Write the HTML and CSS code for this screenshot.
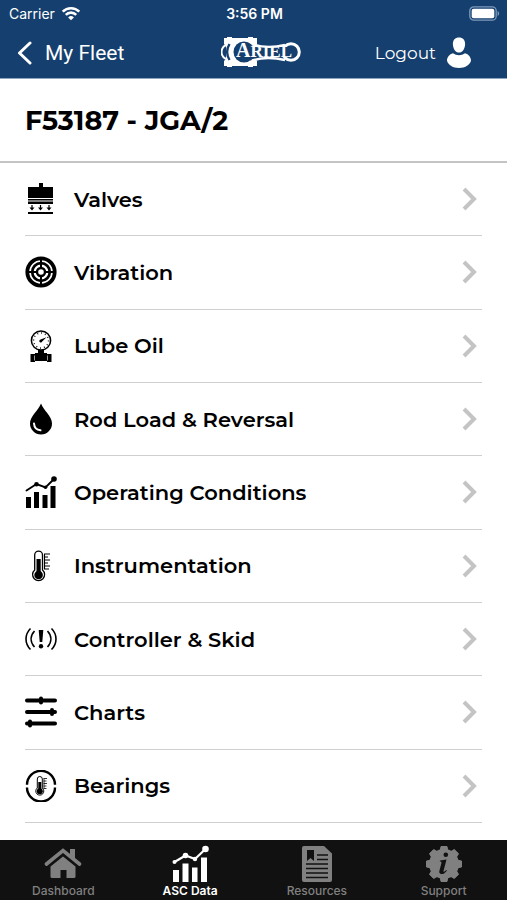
FILE: index.html
```html
<!DOCTYPE html>
<html lang="en">
  <head>
    <meta charset="UTF-8" />
    <meta name="viewport" content="width=device-width, initial-scale=1.0" />
    <title>My Fleet - F53187</title>
    <link rel="stylesheet" href="styles.css">
  </head>
  <body>
    <header class="header">
      <div class="status-bar">
        <div class="carrier">
          <span>Carrier</span>
          <svg width="20" height="15" viewBox="0 0 20 15" fill="none" stroke="#fff" stroke-width="2.6">
            <path d="M1.7 5.6a11.8 11.8 0 0 1 16.6 0M4.8 8.8a7.4 7.4 0 0 1 10.4 0" />
            <path d="M10 14.3l-2.9-2.9a4.1 4.1 0 0 1 5.8 0z" fill="#fff" stroke="none" />
          </svg>
        </div>
        <span class="time">3:56 PM</span>
        <svg class="battery" width="31" height="15" viewBox="0 0 31 15">
          <rect x=".8" y=".8" width="26.4" height="13.4" rx="4" fill="none" stroke="#7f9bb9" stroke-width="1.3" />
          <rect x="2.7" y="2.7" width="22.6" height="9.6" rx="2" fill="#fff" />
          <path d="M28.6 5c2 .8 2 4.2 0 5z" fill="#7f9bb9" />
        </svg>
      </div>
      <nav class="nav-bar">
        <a class="back" href="#">
          <svg width="16" height="24" viewBox="0 0 16 24" fill="none" stroke="#fff" stroke-width="3" stroke-linecap="round" stroke-linejoin="round">
            <path d="M13 2L2.500 12 13 22" />
          </svg>
          <span>My Fleet</span>
        </a>
        <svg class="logo" width="80" height="32" viewBox="0 0 80 32" role="img" aria-label="Ariel">
          <path d="M3 1h3V0h5v1h16V0h5v1h4v6l-2 2v13l2 2v5h-4v1h-5v-1H11v1H6v-1H3v-5l2-2V9L3 7z" fill="#fff" />
          <path d="M5 8C-1 11-1 19 5 22" fill="none" stroke="#fff" stroke-width="2" />
          <path d="M8.500 7c-3 5-3 11 0 16" fill="none" stroke="#153f6e" stroke-width="2.400" />
          <circle cx="23" cy="15" r="10.500" fill="#153f6e" />
          <path d="M29 7.500c12 4 24 3 35 1v14c-11-2-23-3-35 1z" fill="#153f6e" />
          <path d="M31 7c11 4 22 3.500 33 1M31 23.500c11-3.500 22-3 33-.5" fill="none" stroke="#fff" stroke-width="2.400" />
          <circle cx="70" cy="15" r="8.300" fill="#153f6e" stroke="#fff" stroke-width="3" />
          <path d="M58 10h10v10H58z" fill="#153f6e" />
          <text class="logo-text" y="20"><tspan x="15" font-size="20">A</tspan><tspan font-size="17">RIEL</tspan></text>
        </svg>
        <a class="logout" href="#">
          <span>Logout</span>
          <svg width="24" height="32" viewBox="0 0 24 32" fill="#fff">
            <path d="M12 .5c3.800 0 6.300 2.700 6.100 6.900-.2 4.300-2.700 8.100-6.100 8.100S6.100 11.700 5.900 7.400C5.700 3.200 8.200.5 12 .5z" />
            <path d="M6 16.200c3.500 2.600 8.500 2.600 12 0 3.700 1 6 4 6 7.600C22.500 28.500 18 31 12 31S1.500 28.500 0 23.800c0-3.600 2.300-6.600 6-7.600z" />
          </svg>
        </a>
      </nav>
    </header>

    <h1 class="title">F53187 - JGA/2</h1>

    <main class="menu">
      <a class="menu-item" href="#">
        <svg class="icon" viewBox="0 0 32 32">
          <path d="M14 0h4v4h10v9H3V4h11zM3 12h25v3H3zM3 16h25v1.500H3zM3 18.500h25V21H3zM3 29h25v2H3z" />
          <path d="M7 22v4M15.500 22v4M24 22v4" stroke="#000" stroke-width="1.200" />
          <path d="M4.500 24.500h5L7 27.500zM13 24.500h5l-2.500 3zM21.500 24.500h5l-2.500 3z" />
        </svg>
        <span class="label">Valves</span>
        <svg class="chevron" viewBox="0 0 15 24"><path d="M2 2l10 10L2 22" /></svg>
      </a>
      <a class="menu-item" href="#">
        <svg class="icon" viewBox="0 0 32 32" fill="none" stroke="#000">
          <circle cx="16" cy="16" r="13.700" stroke-width="3.800" />
          <circle cx="16" cy="16" r="8.800" stroke-width="2.700" />
          <circle cx="16" cy="16" r="4" stroke-width="2.400" />
          <path d="M16 1v11M16 20v11M1 16h11M20 16h11" stroke-width="2" />
        </svg>
        <span class="label">Vibration</span>
        <svg class="chevron" viewBox="0 0 15 24"><path d="M2 2l10 10L2 22" /></svg>
      </a>
      <a class="menu-item" href="#">
        <svg class="icon" viewBox="0 0 32 32">
          <circle cx="16" cy="10.500" r="9.600" fill="none" stroke="#000" stroke-width="1.500" />
          <circle cx="16" cy="10.500" r="7.500" fill="none" stroke="#000" stroke-width="1.500" stroke-dasharray=".9 3.020" />
          <path d="M21.500 7.200l-4.300 4.300a1.500 1.500 0 1 1-1.600-2z" />
          <path d="M13 20h6v3h3v1h4.500v8H22v-1H10v1H5.500v-8H10v-1h3z" />
          <path d="M9.500 25.500v5M22.500 25.500v5" stroke="#fff" stroke-width=".6" />
        </svg>
        <span class="label">Lube Oil</span>
        <svg class="chevron" viewBox="0 0 15 24"><path d="M2 2l10 10L2 22" /></svg>
      </a>
      <a class="menu-item" href="#">
        <svg class="icon" viewBox="0 0 32 32">
          <path d="M16 .5c2.500 7 11 12.500 11 20a11 11 0 0 1-22 0c0-7.500 8.500-13 11-20z" />
          <path d="M9 20.500c.3 4 2.700 6.500 6.500 6.800" fill="none" stroke="#fff" stroke-width="2" stroke-linecap="round" />
        </svg>
        <span class="label">Rod Load &amp; Reversal</span>
        <svg class="chevron" viewBox="0 0 15 24"><path d="M2 2l10 10L2 22" /></svg>
      </a>
      <a class="menu-item" href="#">
        <svg class="icon" viewBox="0 0 32 32">
          <path d="M1 21h5v11H1zM9 16h5v16H9zM17.500 19h5v13h-5zM25.500 10h5v22h-5z" />
          <path d="M1.500 14.500l10-6.500 9 3.500L29 3" fill="none" stroke="#000" stroke-width="1.900" stroke-linecap="round" />
          <circle cx="11.500" cy="8.300" r="2.300" />
          <circle cx="20.500" cy="11.300" r="1.800" />
          <circle cx="29" cy="3" r="2.800" />
        </svg>
        <span class="label">Operating Conditions</span>
        <svg class="chevron" viewBox="0 0 15 24"><path d="M2 2l10 10L2 22" /></svg>
      </a>
      <a class="menu-item" href="#">
        <svg class="icon" viewBox="0 0 32 32">
          <path d="M9.700 20V5a3.900 3.900 0 0 1 7.800 0v15a6 6 0 1 1-7.800 0z" fill="none" stroke="#000" stroke-width="1.300" />
          <circle cx="13.600" cy="25" r="4.300" />
          <path d="M13.600 25V9" stroke="#000" stroke-width="4.200" />
          <path d="M19 4h6M19 7h4M19 10h6M19 13h4M19 16h6M19 19h5M19.500 4v15" stroke="#000" stroke-width="1.100" fill="none" />
        </svg>
        <span class="label">Instrumentation</span>
        <svg class="chevron" viewBox="0 0 15 24"><path d="M2 2l10 10L2 22" /></svg>
      </a>
      <a class="menu-item" href="#">
        <svg class="icon" viewBox="0 0 32 32">
          <path d="M13.700 7h4.600l-1 12h-2.600z" />
          <circle cx="16" cy="23.300" r="2.200" />
          <path d="M5.500 5.500c-6 6-6 15 0 21M9.500 8c-4.500 5-4.500 11 0 16M26.500 5.500c6 6 6 15 0 21M22.500 8c4.500 5 4.500 11 0 16" fill="none" stroke="#000" stroke-width="1.600" />
        </svg>
        <span class="label">Controller &amp; Skid</span>
        <svg class="chevron" viewBox="0 0 15 24"><path d="M2 2l10 10L2 22" /></svg>
      </a>
      <a class="menu-item" href="#">
        <svg class="icon" viewBox="0 0 32 32" fill="none" stroke="#000" stroke-width="4" stroke-linecap="round">
          <path d="M2 4.500h28M2 16h28M2 27.500h28" />
          <path d="M16 2.500v4M27 14v4M5 25.500v4" />
        </svg>
        <span class="label">Charts</span>
        <svg class="chevron" viewBox="0 0 15 24"><path d="M2 2l10 10L2 22" /></svg>
      </a>
      <a class="menu-item" href="#">
        <svg class="icon" viewBox="0 0 32 32">
          <path d="M2 14.800a14 14 0 0 1 28 0M2 17.500a14 14 0 0 0 28 0" fill="none" stroke="#000" stroke-width="2.400" />
          <path d="M12.300 18V9a2.500 2.500 0 0 1 5 0v9a4 4 0 1 1-5 0z" fill="none" stroke="#000" stroke-width="1" />
          <circle cx="14.800" cy="21.300" r="3" />
          <path d="M14.800 21v-9" stroke="#000" stroke-width="3" />
          <path d="M18.500 8.500H22M18.500 11h3M18.500 13.500H22M18.500 16h3M18.500 18.500h3M19 8.500v10" stroke="#000" stroke-width=".8" />
        </svg>
        <span class="label">Bearings</span>
        <svg class="chevron" viewBox="0 0 15 24"><path d="M2 2l10 10L2 22" /></svg>
      </a>
    </main>

    <footer class="tab-bar">
      <a class="tab" href="#">
        <svg width="38" height="38" viewBox="0 0 38 38" fill="#808080">
          <path d="M19 11.500L31.500 21.500v10a1.500 1.500 0 0 1-1.500 1.500h-7.500v-8h-6v8H8a1.500 1.500 0 0 1-1.500-1.500v-10z" />
          <path d="M2.500 19L19 5.500 35.500 19" fill="none" stroke="#808080" stroke-width="3.600" stroke-linecap="round" />
          <path d="M26 4h5v11l-5-4z" />
        </svg>
        <span>Dashboard</span>
      </a>
      <a class="tab active" href="#">
        <svg width="38" height="38" viewBox="0 0 38 38" fill="#fff">
          <path d="M2 25h6v12H2zM11.500 18.500h6V37h-6zM21 22.500h5.500V37H21zM30 12.500h6V37h-6z" />
          <path d="M3.500 17l11-6.500L24 14 34.500 4" fill="none" stroke="#fff" stroke-width="2.200" />
          <circle cx="3.500" cy="17" r="2" />
          <circle cx="14.500" cy="10.500" r="2.800" />
          <circle cx="24" cy="14" r="2.200" />
          <circle cx="34.500" cy="4" r="3.300" />
        </svg>
        <span>ASC Data</span>
      </a>
      <a class="tab" href="#">
        <svg width="38" height="38" viewBox="0 0 38 38">
          <path d="M6 1h20l8 7.500V35a2 2 0 0 1-2 2H6a2 2 0 0 1-2-2V3a2 2 0 0 1 2-2z" fill="#808080" />
          <path d="M9 5h7v11l-3.500-3L9 16z" fill="#111" />
          <path d="M19 10h11M19 14.500h11M8 19h22M8 23.500h22M8 28h22M8 32.500h22" stroke="#111" stroke-width="1.300" />
        </svg>
        <span>Resources</span>
      </a>
      <a class="tab" href="#">
        <svg width="38" height="38" viewBox="0 0 38 38">
          <circle cx="19" cy="19" r="15" fill="#808080" />
          <path d="M16 1.500h6l1 5h-8zM16 36.500h6l1-5h-8zM1.500 16v6l5 1v-8zM36.500 16v6l-5 1v-8zM4.500 8.700l4.200-4.200 5 3-6.200 6.200zM33.500 8.700l-4.200-4.200-5 3 6.200 6.200zM4.500 29.300l4.200 4.200 5-3-6.200-6.200zM33.500 29.300l-4.200 4.200-5-3 6.200-6.200z" fill="#808080" stroke="#808080" stroke-linejoin="round" />
          <circle cx="20.800" cy="9.800" r="2.300" fill="#111" />
          <path d="M15 15.500l6.500-1-3 11.500c-.3 1.300.8 1 2.800-1l.6.700c-2.500 3-4.200 3.600-5.900 3.300-1.600-.3-2-1.600-1.600-3.200l2-7.500c.3-1.500-.3-1.800-1.600-1.800z" fill="#111" />
        </svg>
        <span>Support</span>
      </a>
    </footer>
  </body>
</html>
```
FILE: styles.css
```css
* {
  box-sizing: border-box;
}
body {
  margin: 0;
  min-height: 100vh;
  display: flex;
  flex-direction: column;
  font-family: Montserrat, Inter, "Open Sans", sans-serif;
  background-color: #fff;
  color: #000;
}
a {
  color: inherit;
  text-decoration: none;
}
svg {
  display: block;
  flex-shrink: 0;
}
.header {
  background-color: #153f6e;
  color: #fff;
  border-bottom: 1px solid #8ea5c0;
}
.status-bar {
  display: grid;
  grid-template-columns: 1fr auto 1fr;
  align-items: center;
  height: 27px;
  padding: 0 7px 0 9px;
  font: 14px/18px Inter, sans-serif;
}
.carrier {
  display: flex;
  align-items: center;
  gap: 6px;
}
.time {
  font-weight: 600;
}
.battery {
  justify-self: end;
}
.nav-bar {
  display: grid;
  grid-template-columns: 1fr auto 1fr;
  align-items: center;
  height: 51px;
}
.back {
  display: flex;
  align-items: center;
  gap: 12px;
  padding-left: 17px;
  font: 21px/24px Roboto, sans-serif;
}
.logo {
  margin-left: 14px;
}
.logo-text {
  font-family: "Liberation Serif", serif;
  font-weight: bold;
  fill: #fff;
}
.logout {
  display: flex;
  align-items: center;
  justify-content: flex-end;
  gap: 11px;
  padding-right: 36px;
  font-size: 17px;
}
.title {
  margin: 0;
  padding: 25px 25px 24px;
  border-bottom: 2px solid #c4c4c4;
  font-size: 27px;
  line-height: 33px;
  font-weight: 700;
}
.menu {
  flex: 1;
  display: grid;
  grid-auto-rows: 1fr;
  padding: 0 25px 17px;
}
.menu-item {
  display: flex;
  align-items: center;
  gap: 17px;
  min-height: 56px;
  border-bottom: 1px solid #cfcfcf;
  font-size: 21px;
  font-weight: 600;
}
.icon {
  width: 32px;
  height: 32px;
}
.label {
  flex: 1;
}
.chevron {
  width: 15px;
  height: 24px;
  margin-right: 5px;
  fill: none;
  stroke: #c4c4c4;
  stroke-width: 4;
}
.tab-bar {
  display: grid;
  grid-template-columns: repeat(4, 1fr);
  height: 60px;
  background-color: #111;
  color: #808080;
}
.tab {
  display: flex;
  flex-direction: column;
  align-items: center;
  padding-top: 5px;
  font: 500 12px/16px Inter, sans-serif;
}
.tab.active {
  color: #fff;
  font-weight: 600;
}
```
